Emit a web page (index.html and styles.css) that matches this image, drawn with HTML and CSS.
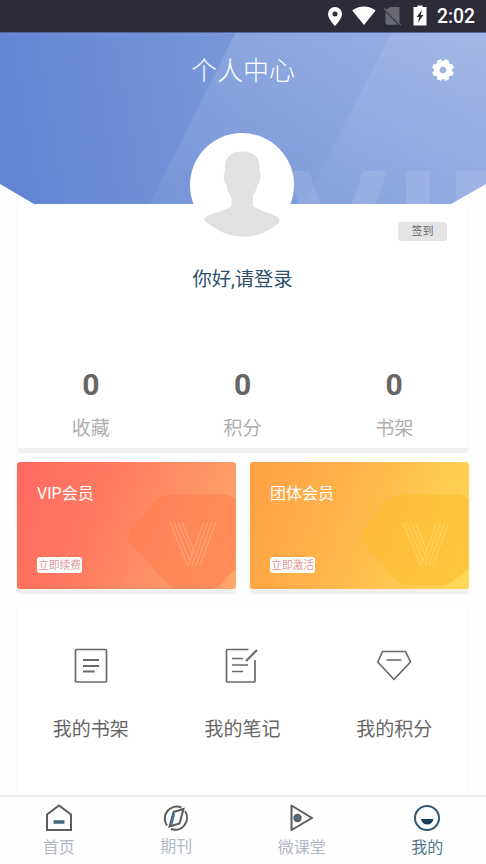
FILE: index.html
```html
<!DOCTYPE html>
<html lang="zh-CN">
<head>
<meta charset="utf-8">
<title>个人中心</title>
<link rel="stylesheet" href="styles.css">
</head>
<body>
<div class="status">
  <svg class="status-icons" width="101" height="32" viewBox="0 0 101 32">
    <path fill="#fff" fill-rule="evenodd" d="M7 7a7 7 0 0 0-7 7c0 5 7 12 7 12s7-7 7-12a7 7 0 0 0-7-7Zm0 4.400a2.500 2.500 0 1 1 0 5 2.500 2.500 0 0 1 0-5Z"/>
    <path fill="#fff" d="M24.200 10.500C31 5.200 40.800 5.200 47.600 10.500L36 25Z"/>
    <path fill="#686973" d="M62.500 7H71.500V23L58 9.800Z"/>
    <path fill="#686973" d="M57.500 11.800L70 24.800H59.500Q57.500 24.800 57.500 23Z"/>
    <path d="M56.200 8.400L72.600 25" stroke="#686973" stroke-width="1.300"/>
    <path fill="#fff" d="M89.500 5.500H94.500V7H98.500V25.500H85.500V7H89.500Z"/>
    <path fill="#2b2c38" d="M94 10L88.500 17H91.300L90 22.500L95.500 15H92.700Z"/>
  </svg>
  <span class="clock">2:02</span>
</div>
<header class="hero">
  <svg class="hero-art" width="486" height="175" viewBox="0 0 486 175">
    <defs>
      <linearGradient id="blue" gradientUnits="userSpaceOnUse" x1="0" y1="80" x2="470" y2="0">
        <stop offset="0" stop-color="#6384d2"/><stop offset=".5" stop-color="#7897da"/><stop offset="1" stop-color="#88a4de"/>
      </linearGradient>
      <linearGradient id="beam" x1="0" y1="0" x2="0" y2="1">
        <stop offset="0" stop-color="#fff" stop-opacity=".14"/><stop offset=".9" stop-color="#fff" stop-opacity=".05"/>
      </linearGradient>
      <linearGradient id="beam2" x1="0" y1="0" x2="0" y2="1">
        <stop offset="0" stop-color="#fff" stop-opacity=".09"/><stop offset=".9" stop-color="#fff" stop-opacity=".04"/>
      </linearGradient>
      <clipPath id="edge"><path d="M0 0H486V152L451 172H34L0 152Z"/></clipPath>
    </defs>
    <g clip-path="url(#edge)">
      <path fill="url(#blue)" d="M0 0H486V175H0Z"/>
      <path fill="url(#beam)" d="M236 0H486V175H148Z"/>
      <path fill="url(#beam2)" d="M392 0H486V175H302Z"/>
      <g fill="#fff" fill-opacity=".1">
        <path d="M288 139H309L321 175H300Z"/><path d="M363 139H387L375 175H351Z"/>
        <path d="M406 139H430V175H406Z"/><path d="M456 139H486V175H456Z"/>
      </g>
    </g>
    <path d="M0 .5H486" stroke="#53679d"/>
  </svg>
  <h1 class="title">个人中心</h1>
  <svg class="gear" width="22" height="22" viewBox="0 0 22 22">
    <g transform="rotate(22.500 11 11)" stroke="#fff" fill="none">
      <circle cx="11" cy="11" r="6.200" stroke-width="5.800"/>
      <path stroke-width="4.800" d="M11 .2V4M11 18V21.800M.2 11H4M18 11H21.800"/>
      <path stroke-width="4.800" transform="rotate(45 11 11)" d="M11 .2V4M11 18V21.800M.2 11H4M18 11H21.800"/>
    </g>
  </svg>
</header>
<main class="content">
  <section class="card profile">
    <svg class="avatar" width="106" height="106" viewBox="0 0 106 106">
      <circle cx="53" cy="53" r="52" fill="#fff"/>
      <path fill="#e1e1e1" d="M53 19.500C63 19.500 70.500 24 70.500 34C70.500 37 70.300 38 70.500 40C73 41 71 51 68.500 53C67.500 59 64.500 62 64 65V74C66 78 89 82 90 87C91 91 88 93 83 96C65 108 41 108 23 94C18 91 15 89 15 87C18 81 39 79 42.500 74V66C41 62 38 59 37.500 53C34.500 51 34 42 36 40C35.500 26 40 19.500 53 19.500Z"/>
    </svg>
    <button class="sign">签到</button>
    <p class="greeting">你好,请登录</p>
    <div class="triple stats">
      <div><b>0</b><span>收藏</span></div>
      <div><b>0</b><span>积分</span></div>
      <div><b>0</b><span>书架</span></div>
    </div>
  </section>
  <section class="plans">
    <article class="plan plan-vip">
      <svg class="plan-art" width="219" height="128" viewBox="0 0 219 128">
        <path class="gem" d="M113 70Q110 75 113 81L149 121Q156 128 163 128H190Q199 128 205 122L219 107V38Q214 33 207 33H153Q144 33 138 39Z"/>
        <path class="corner" d="M0 98Q14 105 27 122Q31 127 38 128H0Z"/>
        <path class="vee" d="M153.500 61L171 104.500M157.500 61L173 99M161.500 61L176 95M165.500 61L178 91M187 61L171 104.500M191 61L175 104.500M195 61L179 104.500M199 61L183 104.500"/>
      </svg>
      <h2>VIP会员</h2><button>立即续费</button>
    </article>
    <article class="plan plan-team">
      <svg class="plan-art" width="219" height="128" viewBox="0 0 219 128">
        <path class="gem" d="M113 70Q109 75 113 81L146 118Q153 124 159 124H190Q199 124 205 118L219 107V38Q214 33 207 33H150Q141 33 136 39Z"/>
        <path class="corner" d="M0 98Q14 105 27 122Q31 127 38 128H0Z"/>
        <path class="vee" d="M153.500 61L171 104.500M157.500 61L173 99M161.500 61L176 95M165.500 61L178 91M187 61L171 104.500M191 61L175 104.500M195 61L179 104.500M199 61L183 104.500"/>
      </svg>
      <h2>团体会员</h2><button>立即激活</button>
    </article>
  </section>
  <section class="card tools">
    <div class="triple">
      <div>
        <svg width="36" height="36" viewBox="0 0 36 36" class="line"><rect x="2.500" y="1.500" width="31" height="32.500" rx="1"/><path d="M10 12H26M10 18H26M10 23.500H21.500" stroke-width="2"/></svg>
        <span>我的书架</span>
      </div>
      <div>
        <svg width="36" height="36" viewBox="0 0 36 36" class="line"><path d="M24.500 1.500H3.500Q2.500 1.500 2.500 2.500V33Q2.500 34 3.500 34H30Q31 34 31 33V12M8 10.500H19M8 17H24M8 23.500H19"/><path d="M22 13L33 2" stroke-width="2.200"/></svg>
        <span>我的笔记</span>
      </div>
      <div>
        <svg width="36" height="36" viewBox="0 0 36 36" class="line"><path d="M6.500 3.500H29.500L34.500 14L18 31.500L1.800 14ZM10.500 12H25.500"/></svg>
        <span>我的积分</span>
      </div>
    </div>
  </section>
</main>
<nav class="tabs">
  <a><svg width="30" height="30" viewBox="0 0 30 30" class="tab-icon"><path d="M3 11.500L15 2.500L27 11.500V27H3Z"/><path d="M9.500 19H20.500" stroke="#42687e" stroke-width="3.500"/></svg>首页</a>
  <a class="up"><svg width="30" height="30" viewBox="0 0 30 30" class="tab-icon"><path d="M20.500 4.500A12 12 0 0 0 6 22.500M10 26A12 12 0 0 0 24 8M12.500 9L22.500 6L18.500 20.500L8.500 23.500Z"/><path d="M13 10.500L10.300 22" stroke="#4f7b94" stroke-width="2.500"/></svg>期刊</a>
  <a><svg width="30" height="30" viewBox="0 0 30 30" class="tab-icon"><path d="M4.500 2.500L25 15L4.500 27Z" stroke-linejoin="round"/><circle cx="10.500" cy="15" r="3.200" fill="#4a738c"/></svg>微课堂</a>
  <a class="active"><svg width="30" height="30" viewBox="0 0 30 30" class="tab-icon"><circle cx="15" cy="15" r="12"/><path d="M9 16H21.500A6.300 6.300 0 0 1 9 16Z" fill="#173d5c" stroke="none"/></svg>我的</a>
</nav>
</body>
</html>
```

FILE: styles.css
```css
* { box-sizing: border-box; }
body {
  margin: 0;
  height: 864px;
  overflow: hidden;
  display: flex;
  flex-direction: column;
  background: #fefefe;
  font-family: Roboto, "Noto Sans CJK SC", sans-serif;
  color: #666;
}
h1, h2, p { margin: 0; font-weight: 400; }
svg { display: block; }
button { border: 0; padding: 0; font: inherit; }

.status {
  height: 32px;
  flex: none;
  display: flex;
  justify-content: flex-end;
  align-items: center;
  gap: 8px;
  padding-right: 11px;
  background: #2b2c38;
  color: #fff;
}
.clock { font-size: 19.300px; font-weight: 500; line-height: 32px; padding-top: 2px; }

.hero {
  position: relative;
  height: 171px;
  flex: none;
  display: grid;
  grid-template-columns: 1fr auto 1fr;
}
.hero-art { position: absolute; left: 0; top: 0; }
.title {
  position: relative;
  grid-column: 2;
  margin-top: 19px;
  font-size: 26px;
  font-weight: 300;
  line-height: 40px;
  color: #fff;
}
.gear { position: relative; justify-self: end; margin: 27px 32px 0 0; }

.content { flex: 1; min-height: 0; padding: 0 17px; display: flex; flex-direction: column; }
.card { flex: none; border: 1px solid #f8f8f8; }
.profile {
  position: relative;
  height: 245px;
  padding-top: 19px;
  border-top: 0;
  border-bottom: 0;
  border-radius: 0 0 4px 4px;
  box-shadow: 0 5px 1px #f1f1f1;
  display: flex;
  flex-direction: column;
}
.profile { background: linear-gradient(transparent 1px, #fff 1px); }
.avatar { position: absolute; left: 171px; top: -71px; }
.sign {
  align-self: flex-end;
  width: 49px;
  height: 19px;
  margin-right: 21px;
  border-radius: 3px;
  background: #e4e4e4;
  color: #666;
  font-size: 11px;
  line-height: 20px;
}
.greeting { margin: 25px 1px 0 0; text-align: center; font-size: 19.300px; line-height: 28px; color: #2b516b; }
.triple { display: grid; grid-template-columns: repeat(3, 1fr); margin: 0 -2px 0 -3px; }
.triple > div { display: flex; flex-direction: column; align-items: center; }
.stats { margin-top: 74px; }
.stats b { font-size: 30px; line-height: 34px; }
.stats span { margin-top: 13px; font-size: 19px; line-height: 28px; color: #afafaf; }

.plans { flex: none; display: grid; grid-template-columns: 1fr 1fr; gap: 14px; margin-top: 13.500px; }
.plan {
  position: relative;
  height: 127.500px;
  padding: 20px 20px 16px;
  border-radius: 3px;
  display: flex;
  flex-direction: column;
  align-items: flex-start;
  justify-content: space-between;
  box-shadow: 0 5px 2px #f0f0f0;
}
.plan-vip { background: linear-gradient(110deg, #ff6860, #ff7c60 40%, #ff9567 72%, #ffa76a); }
.plan-team { background: linear-gradient(110deg, #ffa044, #ffb34a 40%, #ffc850 72%, #ffda55); }
.plan-art { position: absolute; left: 0; top: 0; height: 100%; border-radius: 3px; }
.gem { fill: #ff7c4c; fill-opacity: .55; }
.corner { fill: #ff7a4e; fill-opacity: .2; }
.vee { fill: none; stroke: #ffb37e; stroke-opacity: .55; stroke-width: 1.500; }
.plan-team .gem { fill: #ffbd30; fill-opacity: .65; }
.plan-team .corner { fill: #ffa644; }
.plan-team .vee { stroke: #ffda70; }
.plan h2 { position: relative; font-size: 16px; line-height: 24px; color: #fff; }
.plan button {
  position: relative;
  width: 45px;
  height: 16px;
  border-radius: 3px;
  background: #fff;
  color: #df9a9a;
  font-size: 10.800px;
  line-height: 15px;
  white-space: nowrap;
}
.tools { height: 215px; margin-top: 17px; padding-top: 42px; border-top: 0; border-bottom: 0; background: #fff; }
.tools span { margin-top: 32px; font-size: 19px; line-height: 28px; }
.line { fill: none; stroke: #696969; stroke-width: 1.700; stroke-linejoin: round; }

.tabs {
  position: relative;
  height: 69px;
  flex: none;
  display: flex;
  justify-content: space-around;
  border-top: 2px solid #ebebeb;
  padding-top: 6px;
  background: #fefefe;
  font-size: 16px;
  line-height: 24px;
  color: #b2b8c5;
}
.tabs a { display: flex; flex-direction: column; align-items: center; gap: 3px; }
.tabs .up { gap: 2px; }
.tab-icon { fill: none; stroke: #5c5c5c; stroke-width: 2; }
.tabs .active { color: #50778e; }
.active .tab-icon { stroke: #315774; }
```
